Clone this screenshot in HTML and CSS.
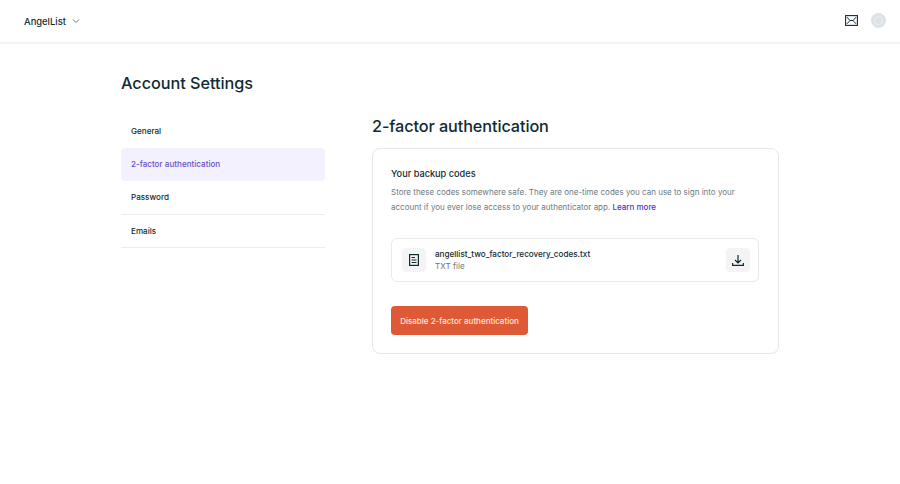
FILE: index.html
```html
<!DOCTYPE html>
<html lang="en">
<head>
<meta charset="utf-8">
<title>Account Settings</title>
<link rel="stylesheet" href="styles.css">
</head>
<body>
<header class="topbar">
  <div class="brand">
    <span class="brand-name">AngelList</span>
    <svg class="chevron" width="8" height="6" viewBox="0 0 8 6"><path d="M1 1.5l3 3 3-3" fill="none" stroke="#5f6b70" stroke-width="0.9"/></svg>
  </div>
  <div class="top-actions">
    <svg class="inbox" width="13" height="11" viewBox="0 0 13 11"><rect x="0.6" y="0.6" width="11.8" height="9.8" fill="none" stroke="#0f2b33" stroke-width="1.1"/><path d="M2 2.2l2.9 3.3L2 8.8M11 2.2L8.1 5.5L11 8.8M4.9 5.5h3.2" fill="none" stroke="#0f2b33" stroke-width="1"/></svg>
    <span class="avatar"><span class="avatar-inner"></span></span>
  </div>
</header>
<main class="page">
  <h1 class="page-title">Account Settings</h1>
  <div class="columns">
    <nav class="side">
      <a class="side-item">General</a>
      <a class="side-item active">2-factor authentication</a>
      <a class="side-item ruled">Password</a>
      <a class="side-item ruled">Emails</a>
    </nav>
    <section class="content">
      <h2 class="content-title">2-factor authentication</h2>
      <div class="card">
        <h3 class="card-title">Your backup codes</h3>
        <p class="card-text">Store these codes somewhere safe. They are one-time codes you can use to sign into your account if you ever lose access to your authenticator app. <a class="learn">Learn more</a></p>
        <div class="file">
          <span class="tile">
            <svg width="10" height="12" viewBox="0 0 10 12"><rect x="0.6" y="0.6" width="8.8" height="10.8" fill="none" stroke="#0f2b33" stroke-width="1.2"/><path d="M2.5 3.5h3.5M2.5 6h5M2.5 8.5h5" fill="none" stroke="#0f2b33" stroke-width="1"/></svg>
          </span>
          <div class="file-info">
            <div class="file-name">angellist_two_factor_recovery_codes.txt</div>
            <div class="file-type">TXT file</div>
          </div>
          <span class="tile">
            <svg width="12" height="11" viewBox="0 0 12 11"><path d="M6 0v7.8M3 5l3 3 3-3M0.6 8v2.4h10.8V8" fill="none" stroke="#0f2b33" stroke-width="1.2"/></svg>
          </span>
        </div>
        <button class="danger">Disable 2-factor authentication</button>
      </div>
    </section>
  </div>
</main>
</body>
</html>
```
FILE: styles.css
```css
* { box-sizing: border-box; }
html, body { margin: 0; padding: 0; background: #fff; }
body { font-family: Inter, "Liberation Sans", sans-serif; color: #0f2b33; height: 484px; overflow: hidden; }
.topbar { height: 44px; border-bottom: 2px solid #f3f3f3; display: flex; align-items: center; justify-content: space-between; padding: 0 14px 0 24px; }
.brand { display: flex; align-items: center; gap: 6px; }
.brand-name { font-size: 9.4px; font-weight: 500; }
.top-actions { display: flex; align-items: center; gap: 13px; margin-bottom: 2px; }
.inbox { display: block; }
.avatar { width: 15px; height: 15px; border-radius: 50%; background: #dde2e6; display: flex; align-items: center; justify-content: center; }
.avatar-inner { width: 9px; height: 9px; border-radius: 50%; border: 1px solid #eceff1; }
.page { padding: 0 121px; }
.page-title { margin: 0; padding-top: 27px; font-size: 16.25px; line-height: 24px; font-weight: 500; letter-spacing: -0.05px; }
.columns { display: flex; gap: 47px; margin-top: 5px; }
.side { width: 204px; padding-top: 14px; }
.side-item { display: flex; align-items: center; height: 33.5px; padding-left: 10px; font-size: 8.1px; font-weight: 500; }
.side-item.active { background: #f4f1fe; color: #6552c4; border-radius: 4px; }
.side-item.ruled { border-bottom: 1px solid #ececec; }
.content { width: 407px; }
.content-title { margin: 0; font-size: 16.25px; line-height: 24px; font-weight: 500; padding-top: 14px; letter-spacing: -0.1px; }
.card { margin-top: 10px; height: 206px; border: 1px solid #e4e6e8; border-radius: 8px; padding: 18px 19px 18px 18px; }
.card-title { margin: 0; font-size: 9.2px; line-height: 14px; font-weight: 500; }
.card-text { margin: 4px 0 0; font-size: 8px; line-height: 14.5px; color: #6d7a80; }
.learn { color: #4b34c4; font-weight: 500; }
.file { margin-top: 24px; height: 44px; border: 1px solid #e8e9ea; border-radius: 6px; display: flex; align-items: center; padding: 0 8px 0 10px; }
.tile { width: 24px; height: 24px; background: #f3f4f3; border-radius: 4px; display: flex; align-items: center; justify-content: center; flex: none; }
.file-info { flex: 1; margin-left: 9px; }
.file-name { font-size: 8.125px; line-height: 12px; font-weight: 500; }
.file-type { font-size: 8.125px; line-height: 12.5px; color: #6d7a80; }
.danger { display: block; margin-top: 24px; width: 137px; height: 29px; padding: 0; border: 0; border-radius: 4px; background: #de5a36; color: #fde6dd; font: 500 8px Inter, sans-serif; }
```
